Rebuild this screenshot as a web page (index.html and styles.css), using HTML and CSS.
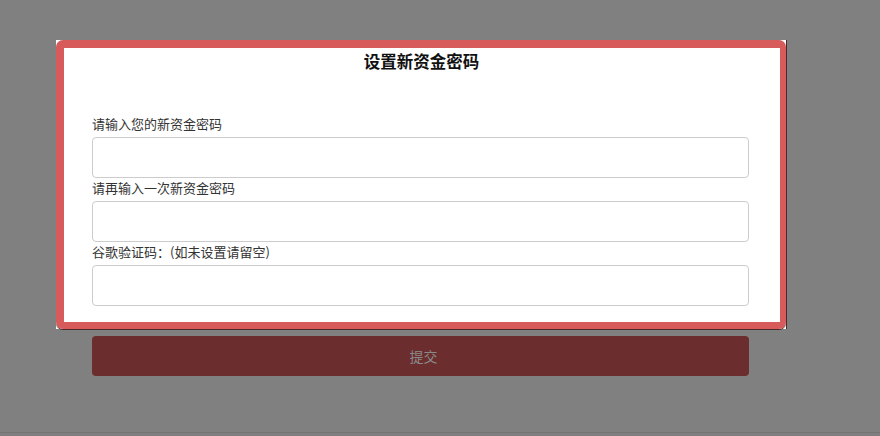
FILE: index.html
```html
<!DOCTYPE html>
<html lang="zh-CN">
<head>
<meta charset="utf-8">
<title>设置新资金密码</title>
<link rel="stylesheet" href="styles.css">
</head>
<body>
<div class="main">
  <div class="modal">
    <div class="frame">
      <h2 class="title">设置新资金密码</h2>
      <div class="form">
        <label class="label">请输入您的新资金密码</label>
        <input class="input" type="password">
        <label class="label">请再输入一次新资金密码</label>
        <input class="input" type="password">
        <label class="label">谷歌验证码：(如未设置请留空)</label>
        <input class="input" type="text">
      </div>
    </div>
  </div>
  <button class="submit" type="button">提交</button>
</div>
<div class="footer"></div>
</body>
</html>
```

FILE: styles.css
```css
html, body {
  margin: 0;
  padding: 0;
}
body {
  background: #808080;
  font-family: "Noto Sans CJK SC", "Noto Sans", sans-serif;
  height: 436px;
  overflow: hidden;
}
.main {
  height: 432px;
  padding-top: 40px;
  box-sizing: border-box;
}
.modal {
  margin-left: 56px;
  width: 730px;
  height: 289px;
  background: #ffffff;
  box-shadow: 1px 0 0 #4a2a2a;
}
.frame {
  box-sizing: border-box;
  height: 289px;
  border: 8px solid #d75b5b;
  border-right-width: 6px;
  border-bottom-width: 7px;
  border-radius: 7px;
  padding: 0 31px 0 28px;
  box-shadow: 0 1px 0 #4a2a2a;
}
.title {
  margin: 0;
  height: 28px;
  line-height: 27px;
  font-size: 16.5px;
  font-weight: 700;
  color: #111;
  text-align: center;
  padding-left: 2px;
}
.form {
  margin-top: 38px;
  display: flex;
  flex-direction: column;
}
.label {
  display: block;
  font-size: 13px;
  line-height: 19px;
  height: 23px;
  color: #333;
}
.input {
  box-sizing: border-box;
  width: 657px;
  height: 41px;
  margin: 0;
  border: 1px solid #cccccc;
  border-radius: 4px;
  background: #fff;
  outline: none;
}
.submit {
  display: block;
  margin: 7px 0 0 92px;
  width: 657px;
  height: 40px;
  border: none;
  border-radius: 4px;
  background: #6b2d2d;
  color: #8a8a8a;
  font-family: "Noto Sans CJK SC", "Noto Sans", sans-serif;
  font-size: 14px;
  padding: 0 0 0 6px;
}
.footer {
  height: 3px;
  border-top: 1px solid #747474;
  background: #7e7e7e;
}
```
